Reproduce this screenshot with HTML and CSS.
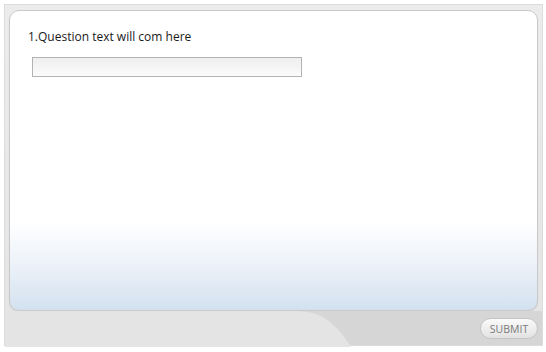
FILE: index.html
```html
<!DOCTYPE html>
<html lang="en">
<head>
  <meta charset="UTF-8">
  <title>Question</title>
  <link rel="stylesheet" href="styles.css">
</head>
<body>
  <div class="frame">
    <div class="panel">
      <p class="question">1.Question text will com here</p>
      <input class="answer" type="text">
    </div>
    <div class="footer">
      <svg class="swoosh" width="360" height="36" viewBox="0 0 360 36">
        <path d="M0 0 H292 C318 0 332 14 346 36 H0 Z" fill="#e4e4e4"/>
      </svg>
      <button class="submit">SUBMIT</button>
    </div>
  </div>
</body>
</html>
```
FILE: styles.css
```css
/* General styles */
* {
  margin: 0;
  padding: 0;
  box-sizing: border-box;
  font-family: "Open Sans", "Noto Sans", sans-serif;
}

body {
  background-color: #fff;
  padding: 4px;
}

/* Outer frame */
.frame {
  width: 539px;
  height: 342px;
  background: linear-gradient(#ececec, #e4e4e4);
  border: 1px solid #dcdcdc;
  padding: 5px 4px 0 4px;
  display: flex;
  flex-direction: column;
}

/* Question panel */
.panel {
  height: 301px;
  background: linear-gradient(#fff 0, #fff 210px, #eef3f9 250px, #d3e1ef 100%);
  border: 1px solid #c9c9c9;
  border-radius: 10px;
  box-shadow: 0 1px 1px rgba(0, 0, 0, 0.08);
  padding: 17px 18px;
}

.question {
  font-size: 12px;
  color: #1a1a1a;
  line-height: 18px;
}

.answer {
  display: block;
  margin: 11px 0 0 4px;
  width: 270px;
  height: 20px;
  border: 1px solid #b3b3b3;
  background: linear-gradient(#eeeeee, #fbfbfb);
  outline: none;
}

/* Bottom bar */
.footer {
  position: relative;
  flex: 1;
  background-color: #d6d6d6;
  margin: 0 -4px 0 -4px;
  display: flex;
  justify-content: flex-end;
  align-items: flex-start;
  padding: 7px 4px 0 0;
}

.swoosh {
  position: absolute;
  left: 0;
  top: 0;
}

.submit {
  position: relative;
  width: 58px;
  height: 21px;
  border: 1px solid #c4c4c4;
  border-radius: 11px;
  background: linear-gradient(#fafafa, #e2e2e2);
  color: #7a7a7a;
  font-size: 10.5px;
}
```
